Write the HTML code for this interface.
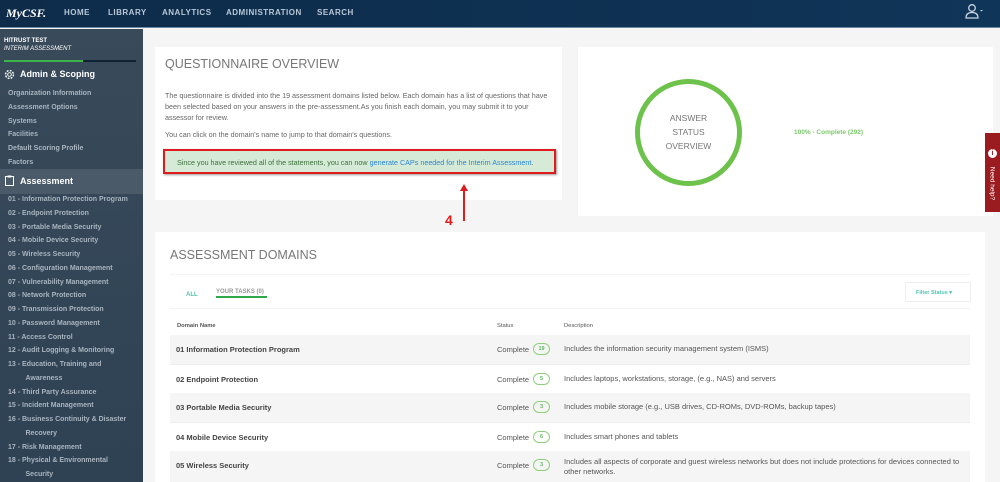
<!DOCTYPE html>
<html><head><style>
*{margin:0;padding:0;box-sizing:border-box}
body{width:1000px;height:482px;overflow:hidden;background:#f5f5f5;font-family:"Liberation Sans",sans-serif;position:relative}
.nav{position:absolute;left:0;top:0;width:1000px;height:28px;background:linear-gradient(90deg,#0e2b4a,#0f3558);border-bottom:1px solid #6b8aa5}
.nav .logo{position:absolute;left:6px;top:6px;color:#fff;font-family:"Liberation Serif",serif;font-style:italic;font-weight:bold;font-size:12px}
.nav .m{position:absolute;top:8px;color:#b9c7d6;font-size:8px;font-weight:bold;letter-spacing:.5px}
.side{position:absolute;left:0;top:29px;width:143px;height:453px;background:linear-gradient(180deg,#394a5a,#2e4254)}
.side .t{position:absolute;left:4px;color:#fff;font-size:6px;font-weight:bold}
.side .it{position:absolute;left:8px;color:#a9b4bf;font-size:7px;font-weight:bold;line-height:13.75px;white-space:nowrap}
.hdr{position:absolute;left:0;width:143px;color:#fff;font-weight:bold;font-size:9px}
.card{position:absolute;background:#fff}
.p{font-size:7.2px;color:#666;line-height:11px}
.row{position:absolute;left:170px;width:800px;height:29px;font-size:7.5px;color:#555}
.row .n{position:absolute;left:6px;top:10px;font-weight:bold;color:#444}
.row .s{position:absolute;left:327px;top:10px}
.row .b{position:absolute;left:363px;top:8px;width:17px;height:12px;border:1px solid #8dd07a;border-radius:7px;font-size:5.5px;color:#5cb85c;text-align:center;line-height:10px;font-weight:bold}
.row .d{position:absolute;left:394px;top:9px;width:400px;line-height:10px}
.g{background:#f5f5f5}
</style></head><body>
<div class="nav">
<div class="logo">MyCSF.</div>
<div class="m" style="left:64px">HOME</div>
<div class="m" style="left:108px">LIBRARY</div>
<div class="m" style="left:162px">ANALYTICS</div>
<div class="m" style="left:226px">ADMINISTRATION</div>
<div class="m" style="left:317px">SEARCH</div>
<svg style="position:absolute;left:964px;top:3px" width="20" height="16" viewBox="0 0 20 16"><circle cx="8" cy="5" r="3.3" fill="none" stroke="#c9d4df" stroke-width="1.3"/><path d="M2 15 Q2 9.5 8 9.5 Q14 9.5 14 15 Z" fill="none" stroke="#c9d4df" stroke-width="1.3"/><path d="M16 7 l3 0 l-1.5 1.5z" fill="#c9d4df"/></svg>
</div>
<div class="side">
<div class="t" style="top:9px">HITRUST TEST</div>
<div class="t" style="top:17px;font-style:italic;font-weight:normal">INTERIM ASSESSMENT</div>
<div style="position:absolute;left:4px;top:31px;width:132px;height:2px;background:#0f2233"></div>
<div style="position:absolute;left:4px;top:31px;width:79px;height:2px;background:#3cb54a"></div>
<div class="hdr" style="top:40px;left:20px">Admin &amp; Scoping</div>
<svg style="position:absolute;left:4px;top:40px" width="11" height="11" viewBox="0 0 12 12"><circle cx="6" cy="6" r="2" fill="none" stroke="#fff"/><circle cx="6" cy="6" r="4.3" fill="none" stroke="#fff" stroke-dasharray="2 1.4" stroke-width="1.6"/></svg>
<div class="it" style="top:58px">Organization Information<br>Assessment Options<br>Systems<br>Facilities<br>Default Scoring Profile<br>Factors</div>
<div style="position:absolute;left:0;top:140px;width:143px;height:25px;background:#4a5a69"></div>
<svg style="position:absolute;left:5px;top:146px" width="9" height="11" viewBox="0 0 9 11"><rect x=".5" y="1.5" width="8" height="9" fill="none" stroke="#fff"/><rect x="2.5" y=".5" width="4" height="2" fill="#fff"/></svg>
<div class="hdr" style="top:147px;left:20px">Assessment</div>
<div class="it" style="top:164px">01 - Information Protection Program<br>02 - Endpoint Protection<br>03 - Portable Media Security<br>04 - Mobile Device Security<br>05 - Wireless Security<br>06 - Configuration Management<br>07 - Vulnerability Management<br>08 - Network Protection<br>09 - Transmission Protection<br>10 - Password Management<br>11 - Access Control<br>12 - Audit Logging &amp; Monitoring<br>13 - Education, Training and<br>&nbsp;&nbsp;&nbsp;&nbsp;&nbsp;&nbsp;&nbsp;&nbsp;&nbsp;Awareness<br>14 - Third Party Assurance<br>15 - Incident Management<br>16 - Business Continuity &amp; Disaster<br>&nbsp;&nbsp;&nbsp;&nbsp;&nbsp;&nbsp;&nbsp;&nbsp;&nbsp;Recovery<br>17 - Risk Management<br>18 - Physical &amp; Environmental<br>&nbsp;&nbsp;&nbsp;&nbsp;&nbsp;&nbsp;&nbsp;&nbsp;&nbsp;Security</div>
</div>

<div class="card" style="left:155px;top:47px;width:407px;height:153px">
<div style="position:absolute;left:10px;top:10px;font-size:12.5px;color:#777">QUESTIONNAIRE OVERVIEW</div>
<div class="p" style="position:absolute;left:10px;top:43px;width:392px">The questionnaire is divided into the 19 assessment domains listed below. Each domain has a list of questions that have been selected based on your answers in the pre-assessment.As you finish each domain, you may submit it to your assessor for review.</div>
<div class="p" style="position:absolute;left:10px;top:82px">You can click on the domain's name to jump to that domain's questions.</div>
<div style="position:absolute;left:8px;top:102px;width:393px;height:25px;background:#d6ebd7;border:2px solid #e01b1b;box-shadow:1px 1px 2px #999;font-size:7.2px;color:#3c6e3c;padding:7px 0 0 12px">Since you have reviewed all of the statements, you can now <span style="color:#2b84d6">generate CAPs needed for the Interim Assessment</span>.</div>
</div>
<div style="position:absolute;left:463px;top:186px;width:2px;height:35px;background:#e01b1b"></div>
<div style="position:absolute;left:460px;top:184px;width:0;height:0;border-left:4px solid transparent;border-right:4px solid transparent;border-bottom:7px solid #e01b1b"></div>
<div style="position:absolute;left:445px;top:212px;font-size:14px;font-weight:bold;color:#e01b1b">4</div>

<div class="card" style="left:578px;top:47px;width:415px;height:169px">
<div style="position:absolute;left:57px;top:32px;width:107px;height:107px;border:5px solid #6cc24a;border-radius:50%;text-align:center;font-size:8.5px;color:#777;line-height:14px;padding-top:27px">ANSWER<br>STATUS<br>OVERVIEW</div>
<div style="position:absolute;left:216px;top:82px;font-size:6.5px;font-weight:bold;color:#7cc96a">100% - Complete (292)</div>
</div>
<div style="position:absolute;left:985px;top:133px;width:15px;height:79px;background:#9b1c20"></div>
<div style="position:absolute;left:988px;top:149px;width:9px;height:9px;border-radius:50%;background:#fff;color:#9b1c20;font-size:7px;font-weight:bold;text-align:center;line-height:9px">i</div>
<div style="position:absolute;left:962px;top:180px;width:60px;transform:rotate(90deg);color:#fff;font-size:6.5px;text-align:center">Need help?</div>

<div class="card" style="left:155px;top:232px;width:830px;height:250px">
<div style="position:absolute;left:15px;top:16px;font-size:12.5px;color:#777">ASSESSMENT DOMAINS</div>
<div style="position:absolute;left:15px;top:42px;width:800px;height:1px;background:#f4f4f4"></div>
<div style="position:absolute;left:31px;top:60px;font-size:6px;font-weight:bold;color:#4fc1b0">ALL</div>
<div style="position:absolute;left:61px;top:57px;font-size:6px;font-weight:bold;color:#999">YOUR TASKS (0)</div>
<div style="position:absolute;left:61px;top:64px;width:51px;height:2px;background:#2fa84a"></div>
<div style="position:absolute;left:15px;top:76px;width:800px;height:1px;background:#f2f2f2"></div>
<div style="position:absolute;left:750px;top:50px;width:66px;height:20px;border:1px solid #eee;font-size:5.5px;font-weight:bold;color:#4fc1b0;padding:7px 0 0 10px">Filter Status ▾</div>
<div style="position:absolute;left:22px;top:91px;font-size:5.8px;color:#555;font-weight:bold">Domain Name</div>
<div style="position:absolute;left:342px;top:91px;font-size:5.8px;color:#555">Status</div>
<div style="position:absolute;left:409px;top:91px;font-size:5.8px;color:#555">Description</div>
</div>
<div class="row g" style="top:335px"><div class="n">01 Information Protection Program</div><div class="s">Complete</div><div class="b">19</div><div class="d">Includes the information security management system (ISMS)</div></div>
<div class="row" style="top:364px;border-top:1px solid #eee"><div class="n">02 Endpoint Protection</div><div class="s">Complete</div><div class="b">5</div><div class="d">Includes laptops, workstations, storage, (e.g., NAS) and servers</div></div>
<div class="row g" style="top:393px"><div class="n">03 Portable Media Security</div><div class="s">Complete</div><div class="b">3</div><div class="d">Includes mobile storage (e.g., USB drives, CD-ROMs, DVD-ROMs, backup tapes)</div></div>
<div class="row" style="top:422px;border-top:1px solid #eee"><div class="n">04 Mobile Device Security</div><div class="s">Complete</div><div class="b">6</div><div class="d">Includes smart phones and tablets</div></div>
<div class="row g" style="top:451px;height:31px"><div class="n">05 Wireless Security</div><div class="s">Complete</div><div class="b">3</div><div class="d" style="top:6px">Includes all aspects of corporate and guest wireless networks but does not include protections for devices connected to other networks.</div></div>
</body></html>
